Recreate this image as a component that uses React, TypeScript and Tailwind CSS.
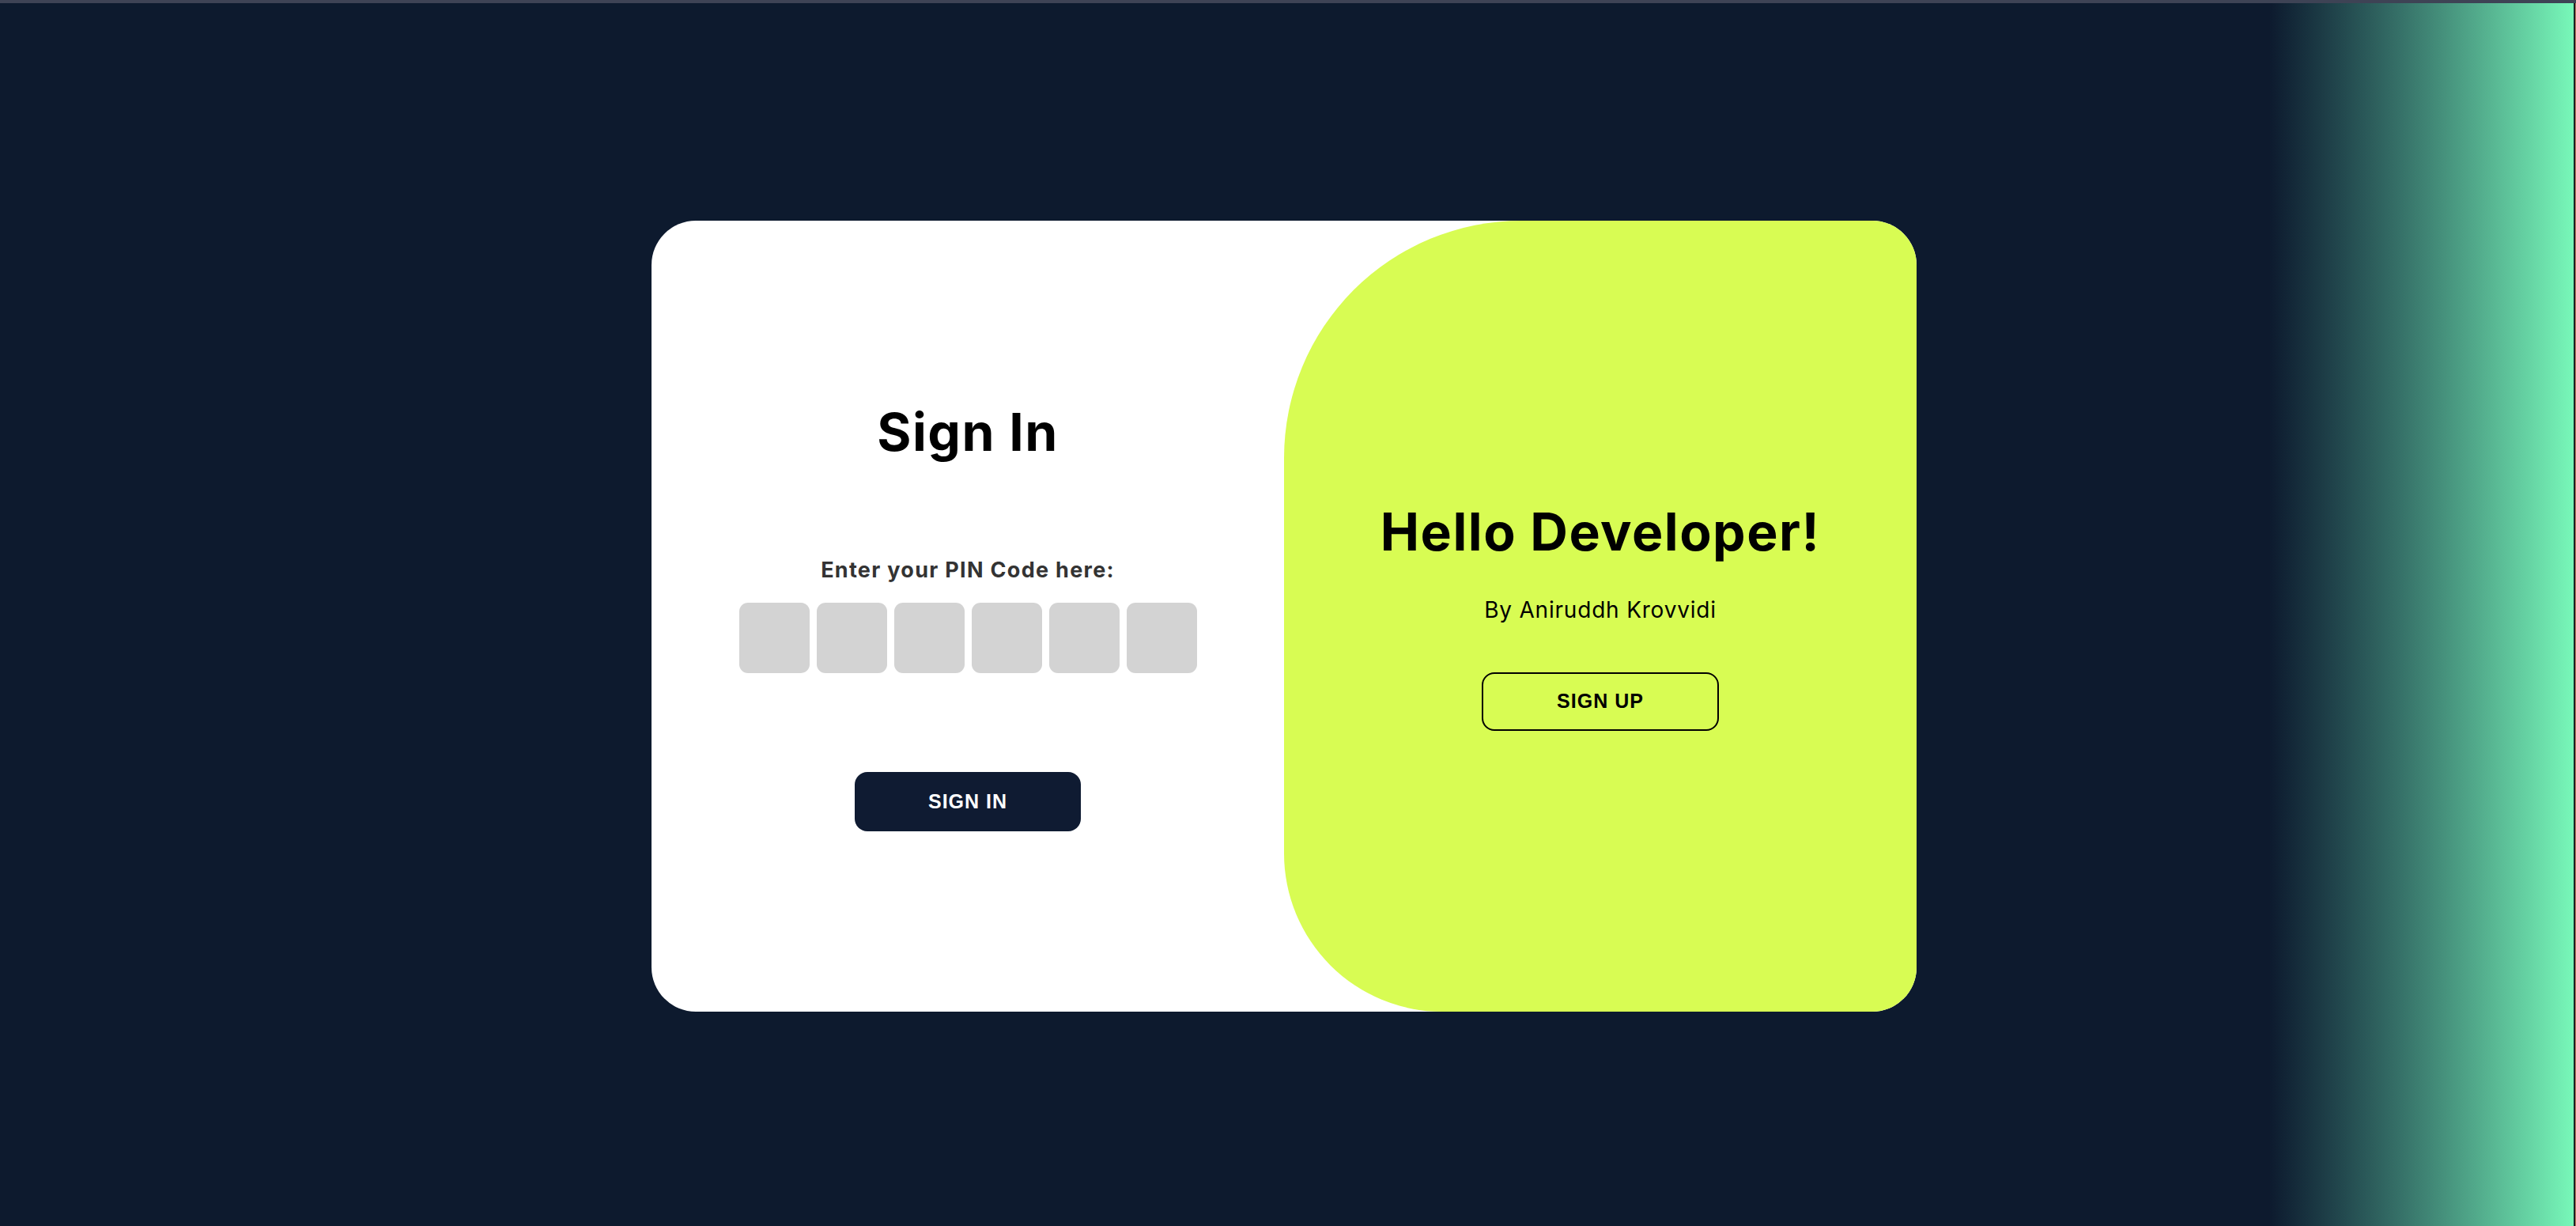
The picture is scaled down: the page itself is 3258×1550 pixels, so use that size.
import React from "react";

export default function App() {
  const heading = { fontFamily: "Inter, 'Noto Sans', sans-serif" };
  const btn = { fontFamily: "'Liberation Sans', Arial, sans-serif" };
  return (
    <div className="w-[3258px] h-[1550px] flex flex-col bg-[#0d1a2e] overflow-hidden">
      <div className="h-[4px] w-full bg-[#3e4355] shrink-0" />
      <div className="relative flex-1 flex items-center justify-center pr-[10px] pt-[4px]">
        <div className="w-[1600px] h-[1000px] bg-white rounded-[56px] overflow-hidden flex">
          {/* Left: sign in */}
          <div className="w-[800px] h-full flex flex-col items-center pt-[234px]" style={heading}>
            <h1 className="text-[66px] leading-[66px] font-bold text-black tracking-[1.5px]">Sign In</h1>
            <p className="mt-[128px] text-[27px] leading-[27px] font-bold text-[#333333] tracking-[1.3px]">
              Enter your PIN Code here:
            </p>
            <div className="mt-[28px] flex gap-[9px]">
              {[0, 1, 2, 3, 4, 5].map((i) => (
                <div key={i} className="w-[89px] h-[89px] rounded-[11px] bg-[#d3d3d3]" />
              ))}
            </div>
            <button
              className="mt-[125px] h-[75px] px-[93px] rounded-[16px] bg-[#0f1b32] text-white text-[25px] font-bold uppercase tracking-[1px]"
              style={btn}
            >
              Sign In
            </button>
          </div>
          {/* Right: green panel */}
          <div
            className="w-[800px] h-full bg-[#d8fc53] rounded-tl-[300px] rounded-bl-[200px] flex flex-col items-center pt-[360px]"
            style={heading}
          >
            <h2 className="text-[66px] leading-[66px] font-bold text-black tracking-[1.5px]">Hello Developer!</h2>
            <p className="mt-[52px] text-[28px] leading-[28px] text-black tracking-[0.8px]">By Aniruddh Krovvidi</p>
            <button
              className="mt-[65px] h-[74px] px-[93px] rounded-[16px] border-2 border-black bg-transparent text-black text-[25px] font-bold uppercase tracking-[1px]"
              style={btn}
            >
              Sign Up
            </button>
          </div>
        </div>
        <div className="absolute right-0 top-0 bottom-0 flex">
          <div className="w-[385px] h-full bg-linear-to-r from-[#0d1a2e] to-[#78f8b9]" />
          <div className="w-[2px] h-full bg-[#1b1f24]" />
          <div className="w-[1px] h-full bg-[#b97a5a]" />
        </div>
      </div>
    </div>
  );
}
